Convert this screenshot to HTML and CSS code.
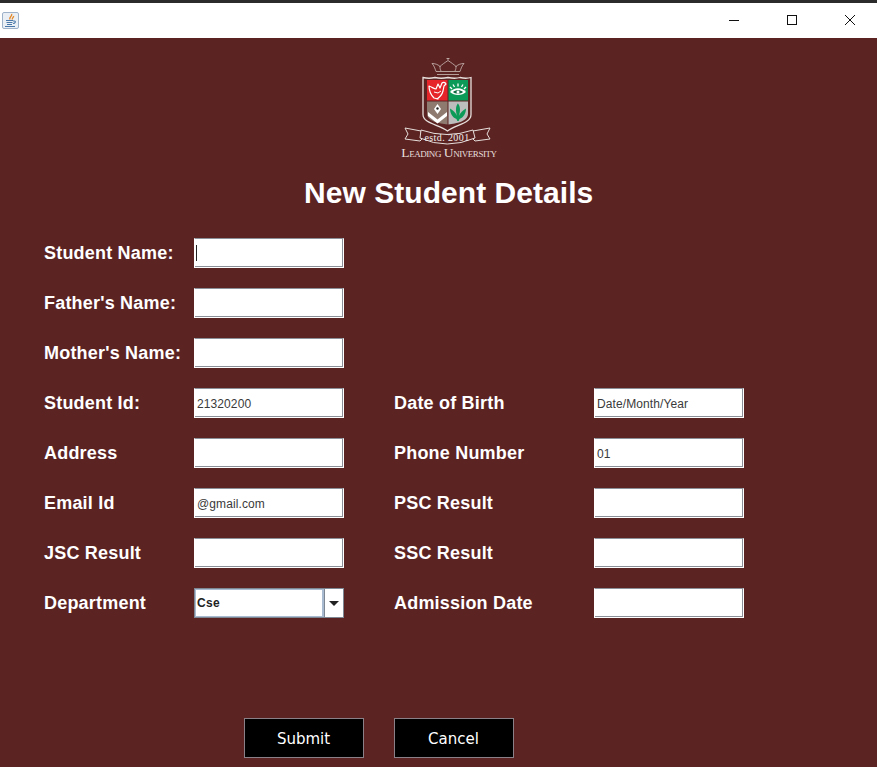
FILE: index.html
```html
<!DOCTYPE html>
<html lang="en">
<head>
    <meta charset="UTF-8">
    <meta name="viewport" content="width=device-width, initial-scale=1.0">
    <title>New Student Details</title>
    <link rel="stylesheet" href="styles.css">
</head>
<body>
    <div class="titlebar">
        <svg class="app-icon" width="17" height="17" viewBox="0 0 17 17">
            <rect x="0.5" y="0.5" width="16" height="16" rx="1.5" fill="#e9eff5" stroke="#9db2c8"/>
            <path d="M9.500 2c1.500 2-3 3-1.500 5.500M11.500 4c.5 1.500-2 2-1 3.500" fill="none" stroke="#e58a2b" stroke-width="1.400"/>
            <path d="M4 8.500h7M4.500 10.500h6M5 12.500h5M3 14.500h10M11 9h1.500c1.500 0 1 2.500-1.500 2.500" fill="none" stroke="#4a78a8" stroke-width="1.100"/>
        </svg>
        <div class="win-buttons">
            <svg width="12" height="12" viewBox="0 0 12 12"><path d="M1 6.500h10" stroke="#111" fill="none"/></svg>
            <svg width="12" height="12" viewBox="0 0 12 12"><rect x="1.500" y="1.500" width="9" height="9" stroke="#111" fill="none"/></svg>
            <svg width="12" height="12" viewBox="0 0 12 12"><path d="M1 1l10 10M11 1L1 11" stroke="#111" fill="none"/></svg>
        </div>
    </div>

    <main class="content">
        <svg class="logo" width="110" height="108" viewBox="395 55 110 108">
            <!-- crown -->
            <g fill="none" stroke="#cbbdb6" stroke-width="0.800">
                <path d="M437 74.500h22M436 71.500h24"/>
                <path d="M436 71.500c-1-3-2-6-4-8 3 0 6 1 8 3 2-2 5-4 8-6 3 2 6 4 8 6 2-2 5-3 8-3-2 2-3 5-4 8"/>
                <path d="M441 71c-1-2-1-3-1-5M455 71c1-2 1-3 1-5M448 60v-2M446.500 58.500h3"/>
            </g>
            <!-- shield -->
            <path d="M423 77.500q6 1.500 12 0 6 1.500 13 0 7 1.500 12 0 6 1.500 11 0v37c0 9-15 10-23.500 16.500-8.500-6.500-24.500-7.500-24.500-16.500z" fill="#5c2323" stroke="#e6dfdb" stroke-width="1.300"/>
            <path d="M427 80h20.500v20.500H427z" fill="#e5252a"/>
            <path d="M448.500 80H468v20.500h-19.500z" fill="#0c9a58"/>
            <path d="M427 101.500h20.500v23c-8-1-20.500-3-20.500-11z" fill="#8f7a70"/>
            <path d="M448.500 101.500H468v12c0 8-12 10-19.500 11z" fill="#bdbdbd"/>
            <!-- dove -->
            <path d="M429 86c3 1 5 3 7 3l2-5 2 4 2-5c1-1 3-1 4 1l-2 2-1 5c-1 4-3 6-6 8l1 0-4-1c-3-3-5-7-5-12z" fill="none" stroke="#fff" stroke-width="1.200" stroke-linejoin="round"/>
            <path d="M434 92l4 1 3-2" fill="none" stroke="#fff" stroke-width="1"/>
            <!-- eye with rays -->
            <path d="M450 92c4-5 12-5 16 0-4 4-12 4-16 0z" fill="#fff"/>
            <path d="M453 92c2-2.500 8-2.500 10 0-2 2-8 2-10 0z" fill="#0c6a40"/>
            <circle cx="458" cy="92" r="1.500" fill="#fff"/>
            <path d="M450 87l2 2M453 84.500l1.500 2.500M458 83.500v3M463 84.500l-1.500 2.500M466 87l-2 2" stroke="#fff" stroke-width="1.300"/>
            <!-- pen and book -->
            <path d="M428 112l9.500 7.500 9.500-7.500v4l-9.500 7.500-9.500-7.500z" fill="#fff"/>
            <path d="M437.500 104l3.500 5-3.500 5-3.500-5z" fill="#fff"/>
            <circle cx="437.500" cy="108.500" r="1.200" fill="#222"/>
            <!-- leaf -->
            <path d="M458 103.500c2.500 3 2.500 8 .8 12.500 1.500-3 4-6 7.200-7.500 0 5-2.500 9-6.500 10.500l-.8 2h-1.400l-.8-2c-4-1.500-6.500-5.500-6.500-10.500 3.200 1.500 5.700 4.500 7.200 7.500-1.700-4.500-1.700-9.500.6-12.500z" fill="#0c9a58"/>
            <!-- ribbon -->
            <g fill="#5c2323" stroke="#e6dfdb" stroke-width="1" stroke-linejoin="round">
                <path d="M421 131l-16-3 3 6-3 5 15 2 2-2z"/>
                <path d="M473 131l17-3-3 6 3 5-15 2-2-2z"/>
                <path d="M421 130q26 9 52 0l2 8q-28 12-55 0z"/>
            </g>
            <text class="logo-estd" x="447" y="141" text-anchor="middle">estd. 2001</text>
            <text class="logo-name" x="449" y="157" text-anchor="middle">Leading University</text>
        </svg>

        <h1 class="heading">New Student Details</h1>

        <form class="form-grid">
            <label>Student Name:</label>
            <div class="field-wrap"><input type="text"><span class="caret"></span></div>
            <span></span><span></span>

            <label>Father's Name:</label>
            <input type="text">
            <span></span><span></span>

            <label>Mother's Name:</label>
            <input type="text">
            <span></span><span></span>

            <label>Student Id:</label>
            <input type="text" value="21320200">
            <label>Date of Birth</label>
            <input type="text" value="Date/Month/Year">

            <label>Address</label>
            <input type="text">
            <label>Phone Number</label>
            <input type="text" value="01">

            <label>Email Id</label>
            <input type="text" value="@gmail.com">
            <label>PSC Result</label>
            <input type="text">

            <label>JSC Result</label>
            <input type="text">
            <label>SSC Result</label>
            <input type="text">

            <label>Department</label>
            <div class="combo">
                <span class="combo-value">Cse</span>
                <span class="combo-arrow"></span>
            </div>
            <label>Admission Date</label>
            <input type="text">
        </form>

        <div class="actions">
            <button type="button">Submit</button>
            <button type="button">Cancel</button>
        </div>
    </main>
</body>
</html>
```

FILE: styles.css
```css
* { box-sizing: border-box; }

body {
    margin: 0;
    height: 767px;
    overflow: hidden;
    background: #5c2323;
    font-family: 'Liberation Sans', Arial, sans-serif;
}

.titlebar {
    height: 38px;
    background: #fff;
    border-top: 3px solid #2b2b2b;
    display: flex;
    align-items: center;
    justify-content: space-between;
    padding: 0 21px 1px 2px;
}

.app-icon { display: block; }

.win-buttons {
    display: flex;
    gap: 46px;
}
.win-buttons svg { display: block; }

.content {
    padding-top: 17px;
    display: flex;
    flex-direction: column;
}

.logo {
    display: block;
    margin-left: 395px;
}

.logo-estd {
    font: 10px 'Liberation Serif', serif;
    letter-spacing: 0.4px;
    fill: #f2eeec;
}
.logo-name {
    font: 13.5px 'Liberation Serif', serif;
    font-variant: small-caps;
    letter-spacing: -0.45px;
    fill: #e6dfdb;
}

.heading {
    margin: 12px 0 0;
    height: 36px;
    line-height: 36px;
    padding-left: 304px;
    font-size: 30px;
    font-weight: bold;
    letter-spacing: 0.05px;
    color: #fff;
}

.form-grid {
    display: grid;
    grid-template-columns: 150px 150px 250px 150px;
    grid-auto-rows: 30px;
    row-gap: 20px;
    margin: 27px 0 0 44px;
}
.form-grid label {
    color: #fff;
    font-size: 18px;
    font-weight: bold;
    line-height: 30px;
    letter-spacing: 0.2px;
}
.form-grid label:nth-child(4n+3) { padding-left: 50px; }

input {
    display: block;
    width: 150px;
    height: 30px;
    margin: 0;
    padding: 1px 2px 0;
    background: #fff;
    border: 1px solid #fff;
    border-top-color: #8a8f98;
    box-shadow: inset -1px -1px 0 #8a8f98;
    border-radius: 0;
    outline: none;
    color: #3a3a3a;
    font: 12px 'Liberation Sans', sans-serif;
    letter-spacing: 0.1px;
}

.field-wrap { position: relative; }
.caret {
    position: absolute;
    left: 2px;
    top: 7px;
    width: 1px;
    height: 16px;
    background: #222;
}

.combo {
    display: flex;
    width: 150px;
    height: 30px;
    border: 1px solid #7d8794;
    background: #fff;
}
.combo-value {
    flex: 1;
    border: 1px solid #a8bbd0;
    border-right-width: 2px;
    padding-left: 1px;
    color: #222;
    font: bold 12px/26px 'Liberation Sans', sans-serif;
    letter-spacing: 0.3px;
}
.combo-arrow {
    width: 19px;
    display: flex;
    align-items: center;
    justify-content: center;
    border-left: 1px solid #7d8794;
}
.combo-arrow::before {
    content: "";
    border-left: 5px solid transparent;
    border-right: 5px solid transparent;
    border-top: 5px solid #222;
}

.actions {
    display: flex;
    gap: 30px;
    margin: 100px 0 0 244px;
}
.actions button {
    width: 120px;
    height: 40px;
    padding: 2px 1px 0 0;
    background: #000;
    border: 1px solid #8a8188;
    color: #fff;
    font: 15px 'DejaVu Sans', sans-serif;
}
```
